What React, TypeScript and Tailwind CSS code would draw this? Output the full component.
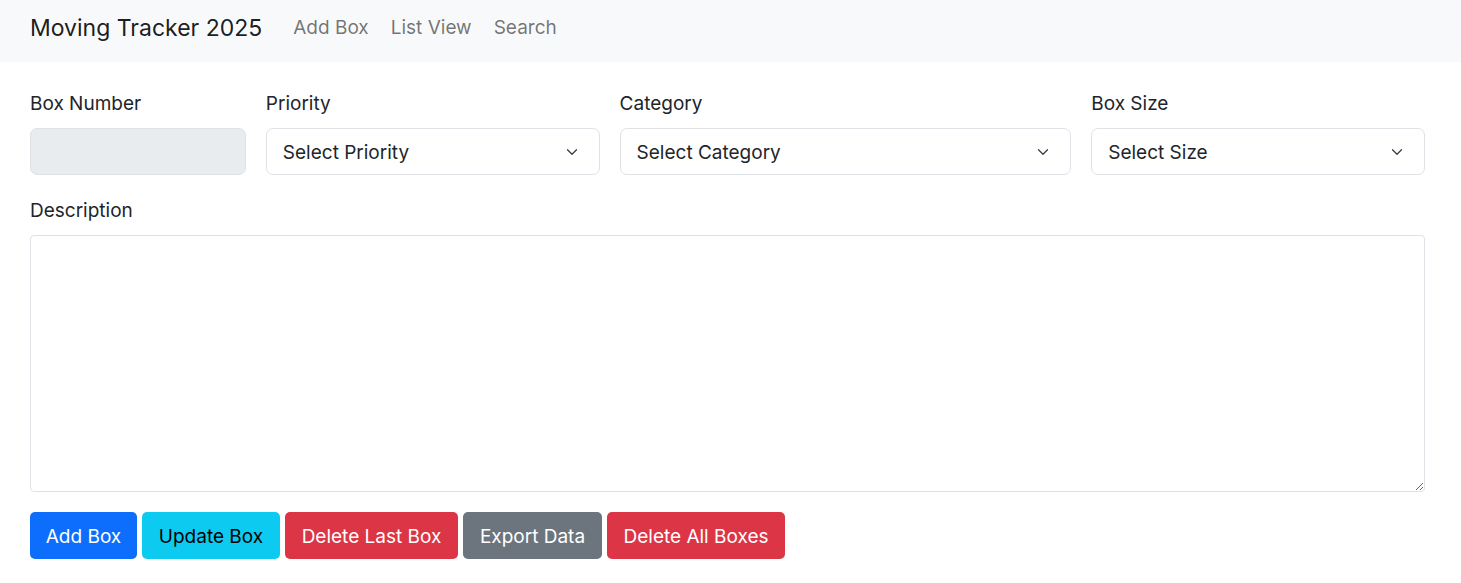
import React from 'react';

const font = { fontFamily: 'Inter, "Liberation Sans", sans-serif' };

function Chevron() {
  return (
    <svg width="16" height="12" viewBox="0 0 16 16" fill="none" stroke="#343a40" strokeWidth="1.6" strokeLinecap="round" strokeLinejoin="round">
      <path d="m2 5 6 6 6-6" />
    </svg>
  );
}

function SelectBox({ text }: { text: string }) {
  return (
    <div className="flex items-center justify-between h-[47px] pl-4 pr-[19px] border border-[#dee2e6] rounded-[7px] bg-white text-[19px] text-[#212529]">
      <span className="pt-[4px]">{text}</span>
      <Chevron />
    </div>
  );
}

function Field({ label, span, children }: { label: string; span: string; children: React.ReactNode }) {
  return (
    <div className={span}>
      <label className="block text-[19px] leading-[27px] mb-[11px] text-[#212529]">{label}</label>
      {children}
    </div>
  );
}

const btn = 'h-[47px] flex items-center justify-center rounded-[5px] pt-[4px]';

export default function App() {
  return (
    <div className="min-h-screen bg-white text-[#212529]" style={font}>
      <nav className="h-[62px] bg-[#f8f9fa] flex items-center px-[30px] gap-[31px] pb-[6px]">
        <span className="text-[23px] text-[#000000e6]">Moving Tracker 2025</span>
        <div className="flex gap-[22px] text-[19px] text-[#0000008c]">
          <a>Add Box</a>
          <a>List View</a>
          <a>Search</a>
        </div>
      </nav>

      <main className="pl-[30px] pr-[36px] pt-[28px]">
        <div className="grid grid-cols-12 gap-x-5">
          <Field label="Box Number" span="col-span-2">
            <div className="h-[47px] border border-[#dee2e6] rounded-[7px] bg-[#e9ecef]" />
          </Field>
          <Field label="Priority" span="col-span-3">
            <SelectBox text="Select Priority" />
          </Field>
          <Field label="Category" span="col-span-4">
            <SelectBox text="Select Category" />
          </Field>
          <Field label="Box Size" span="col-span-3">
            <SelectBox text="Select Size" />
          </Field>
        </div>

        <div className="mt-[22px]">
          <label className="block text-[19px] leading-[27px] mb-[11px]">Description</label>
          <textarea className="block w-full h-[257px] border border-[#dee2e6] rounded-[4px] bg-white outline-none" />
        </div>

        <div className="flex gap-[5px] mt-[20px] text-[19px]">
          <button className={`${btn} w-[107px] bg-[#0d6efd] text-white`}>Add Box</button>
          <button className={`${btn} w-[138px] bg-[#0dcaf0] text-black`}>Update Box</button>
          <button className={`${btn} w-[173px] bg-[#dc3545] text-white`}>Delete Last Box</button>
          <button className={`${btn} w-[139px] bg-[#6c757d] text-white`}>Export Data</button>
          <button className={`${btn} w-[178px] bg-[#dc3545] text-white`}>Delete All Boxes</button>
        </div>
      </main>
    </div>
  );
}
